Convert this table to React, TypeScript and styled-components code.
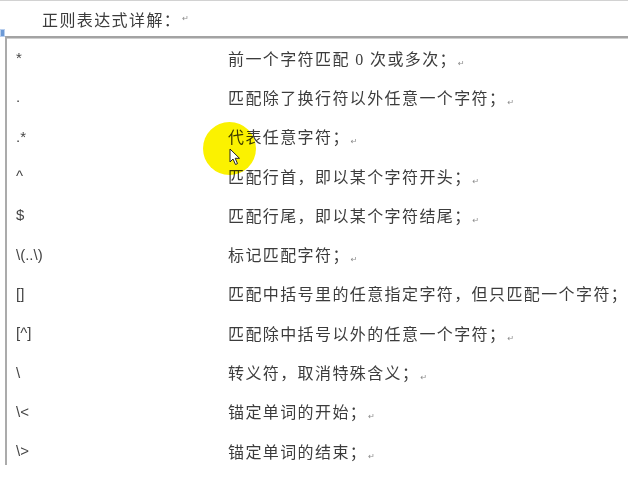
import styled, { createGlobalStyle } from "styled-components";

const rows: [string, string][] = [
  ["*", "前一个字符匹配 0 次或多次；"],
  [".", "匹配除了换行符以外任意一个字符；"],
  [".*", "代表任意字符；"],
  ["^", "匹配行首，即以某个字符开头；"],
  ["$", "匹配行尾，即以某个字符结尾；"],
  ["\\(..\\)", "标记匹配字符；"],
  ["[]", "匹配中括号里的任意指定字符，但只匹配一个字符；"],
  ["[^]", "匹配除中括号以外的任意一个字符；"],
  ["\\", "转义符，取消特殊含义；"],
  ["\\<", "锚定单词的开始；"],
  ["\\>", "锚定单词的结束；"],
];

const App = () => {
  return (
    <>
      <GlobalStyle />
      <Page>
        <Heading>
          正则表达式详解：<ReturnMark>↵</ReturnMark>
        </Heading>
        <MoveHandle />
        <Table>
          {rows.map(([pattern, meaning], i) => (
            <Row key={i}>
              <Pattern>{pattern}</Pattern>
              <Meaning>
                {meaning}
                {i !== 6 && <ReturnMark>↵</ReturnMark>}
              </Meaning>
            </Row>
          ))}
        </Table>
        <Highlight />
        <Cursor viewBox="0 0 12 18" width="12" height="18">
          <path
            d="M1 1 L1 14 L4 11 L6.5 16.5 L8.5 15.6 L6.2 10.3 L10.5 10.3 Z"
            fill="#fff"
            stroke="#222"
            strokeWidth="1"
            strokeLinejoin="round"
          />
        </Cursor>
      </Page>
    </>
  );
};

export default App;

const GlobalStyle = createGlobalStyle`
  body {
    margin: 0;
    background: #fff;
  }
`;

const Page = styled.div`
  position: relative;
  width: 628px;
  height: 486px;
  overflow: hidden;
  border-top: 1px solid #d2d2d2;
  box-sizing: border-box;
  font-family: "Liberation Serif", "Noto Sans CJK SC", serif;
  color: #3c3c3c;
`;

const Heading = styled.div`
  height: 35px;
  display: flex;
  align-items: center;
  padding-left: 42px;
  font-size: 16px;
  letter-spacing: 1.4px;
`;

const ReturnMark = styled.span`
  font-family: "DejaVu Sans", sans-serif;
  font-size: 8px;
  color: #8a8a8a;
  letter-spacing: 0;
  margin-left: 1px;
  vertical-align: -1px;
`;

const MoveHandle = styled.div`
  position: absolute;
  left: 0;
  top: 28px;
  width: 3px;
  height: 6px;
  background: #6d9ad6;
  border: 1px solid #b9cfee;
`;

const Table = styled.div`
  margin-left: 5px;
  max-height: 427px;
  overflow: hidden;
  border-top: 2px solid #a3a3a3;
  border-left: 2px solid #ababab;
  box-shadow: inset 0 1px 0 #cfcfcf;
`;

const Row = styled.div`
  display: grid;
  grid-template-columns: 212px 1fr;
  align-items: center;
  height: 39.3px;
  padding-left: 9px;
`;

const Pattern = styled.span`
  font-family: "Liberation Sans", sans-serif;
  font-size: 15px;
  color: #444;
`;

const Meaning = styled.span`
  font-size: 16px;
  letter-spacing: 1.4px;
  white-space: nowrap;
`;

const Highlight = styled.div`
  position: absolute;
  left: 203px;
  top: 121px;
  width: 53px;
  height: 53px;
  border-radius: 50%;
  background: #fbf200;
  mix-blend-mode: multiply;
`;

const Cursor = styled.svg`
  position: absolute;
  left: 229px;
  top: 147px;
`;
